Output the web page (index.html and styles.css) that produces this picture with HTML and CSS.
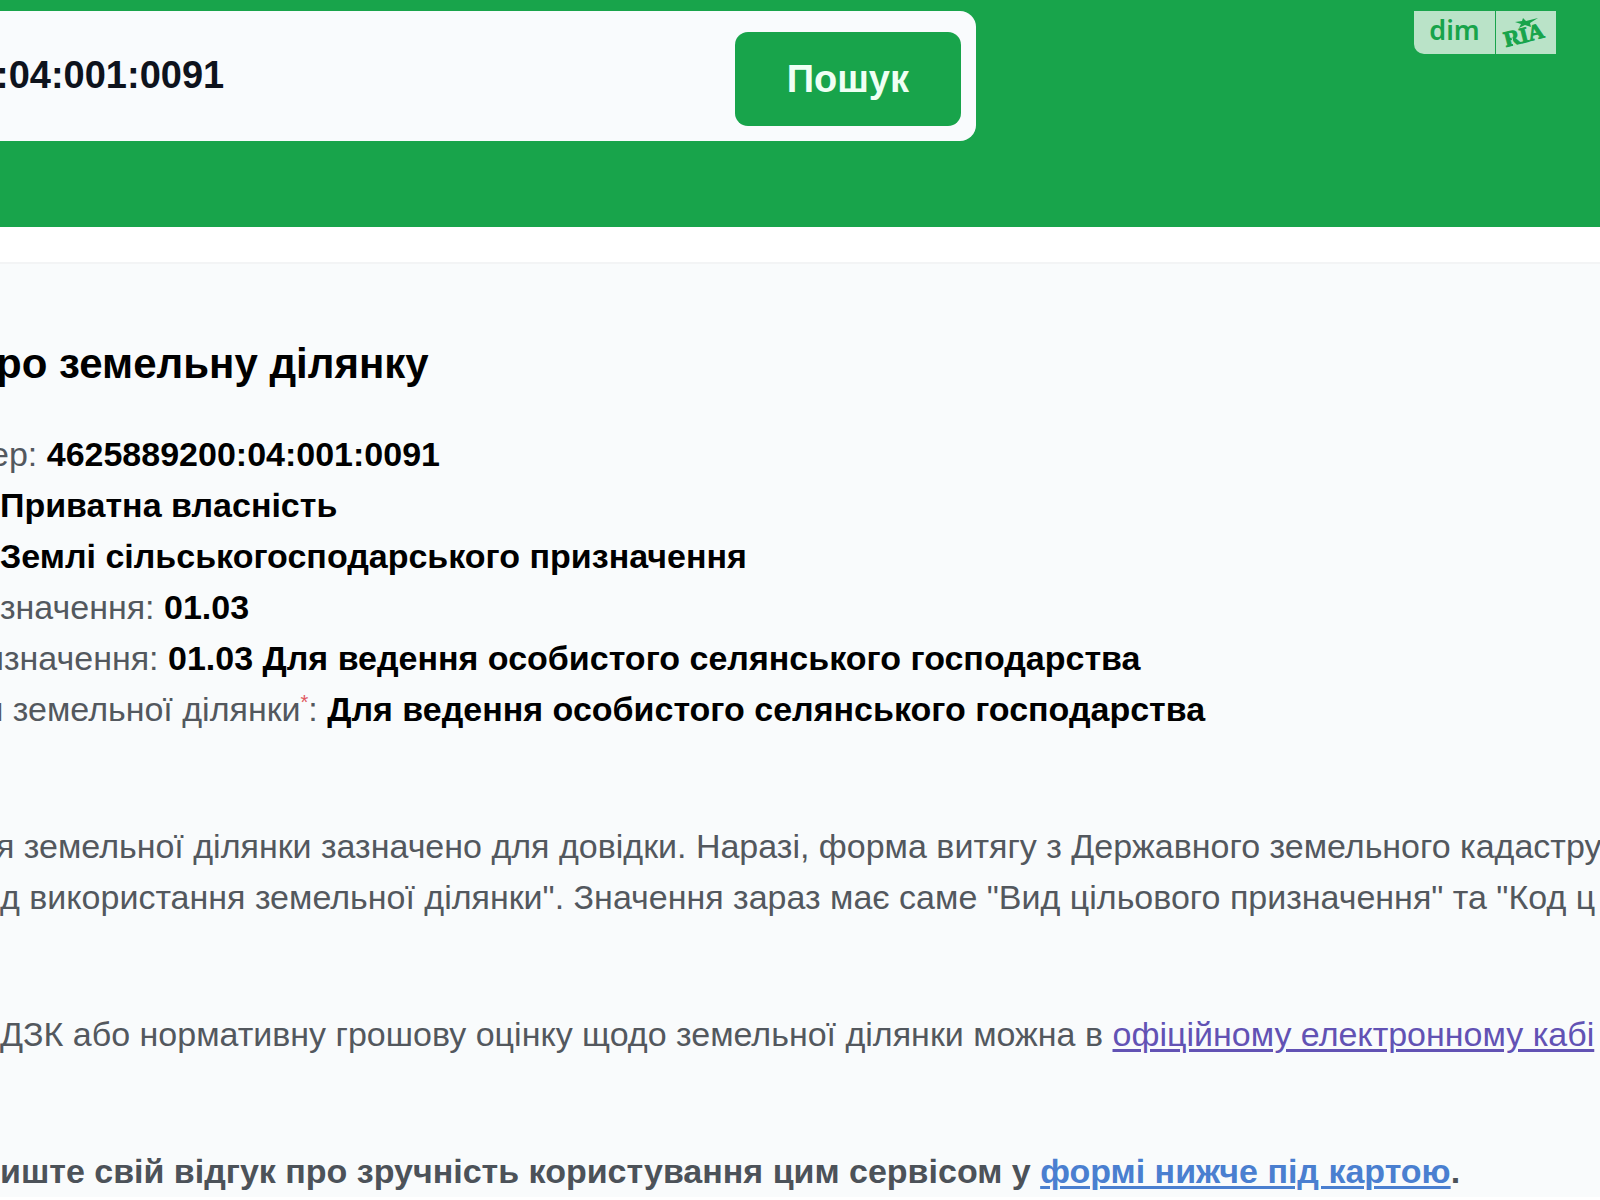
FILE: index.html
```html
<!DOCTYPE html>
<html lang="uk">
<head>
<meta charset="utf-8">
<title>Земельна ділянка</title>
<link rel="stylesheet" href="styles.css">
</head>
<body>
<header class="header">
  <form class="search">
    <input class="search-input" type="text" aria-label="Пошук" value=":04:001:0091">
    <button class="search-button" type="button">Пошук</button>
  </form>
  <div class="badge">
    <span class="badge-name">dim</span>
    <svg class="badge-logo" viewBox="0 0 60 43" width="60" height="43" role="img" aria-label="RIA">
      <text class="badge-ria" x="10" y="36" transform="rotate(-14 10 36)">RIA</text>
      <path d="M27 7 L30 10 L42 7 L34 12 L35 16 L29 14 L23 17 L25 13 L19 11 L26 10 Z"/>
      <path class="badge-cut" d="M15 22 L18 36 M49 15 L53 28"/>
    </svg>
  </div>
</header>
<main class="parcel">
  <h1 class="title cut-slight">ро земельну ділянку</h1>
  <div class="facts">
    <p class="line cut">ер: <strong>4625889200:04:001:0091</strong></p>
    <p class="line"><strong>Приватна власність</strong></p>
    <p class="line"><strong>Землі сільськогосподарського призначення</strong></p>
    <p class="line">значення: <strong>01.03</strong></p>
    <p class="line cut-deep">изначення: <strong>01.03 Для ведення особистого селянського господарства</strong></p>
    <p class="line cut-deep">я земельної ділянки<sup class="star">*</sup>: <strong>Для ведення особистого селянського господарства</strong></p>
  </div>
  <div class="note">
    <p class="line cut-slight">я земельної ділянки зазначено для довідки. Наразі, форма витягу з Державного земельного кадастру</p>
    <p class="line">д використання земельної ділянки". Значення зараз має саме "Вид цільового призначення" та "Код ц</p>
  </div>
  <p class="line">ДЗК або нормативну грошову оцінку щодо земельної ділянки можна в <a class="visited" href="#cabinet">офіційному електронному кабі</a></p>
  <p class="line feedback">иште свій відгук про зручність користування цим сервісом у <a class="link" href="#form">формі нижче під картою</a>.</p>
</main>
</body>
</html>
```
FILE: styles.css
```css
* { box-sizing: border-box; }
body {
  margin: 0;
  overflow: hidden;
  background: #fff;
  color: #53585e;
  font-family: "Liberation Sans", Arial, sans-serif;
  font-size: 34px;
}
.header {
  position: relative;
  padding: 11px 0 86px;
  background: #18a44b;
}
.search {
  display: flex;
  width: 61%;
  padding: 21px 15px 15px 0;
  background: #f9fbfd;
  border-radius: 0 16px 16px 0;
}
.search-input {
  flex: 1;
  min-width: 0;
  padding: 0 0 8px;
  border: 0;
  outline: 0;
  background: transparent;
  color: #0e131d;
  font: bold 38px "Liberation Sans", Arial, sans-serif;
  text-indent: -4px;
}
.search-button {
  height: 94px;
  padding: 0 52px;
  border: 0;
  border-radius: 13px;
  background: #18a44b;
  color: #effff4;
  font: bold 38px "Liberation Sans", Arial, sans-serif;
}
.badge {
  position: absolute;
  top: 11px;
  right: 44px;
  display: flex;
  height: 43px;
  border-radius: 0 0 0 10px;
  background: #bae3c8;
  color: #18a44b;
}
.badge-name {
  width: 82px;
  border-right: 1px solid #18a44b;
  font: 600 27px/38px "Noto Sans", sans-serif;
  text-align: center;
}
.badge-logo { fill: #18a44b; }
.badge-ria { font: bold 22px "Liberation Serif", serif; stroke: #18a44b; stroke-width: 1; }
.badge-cut { stroke: #bae3c8; stroke-width: 1; }
.parcel {
  display: flex;
  flex-direction: column;
  gap: 86px;
  margin-top: 35px;
  padding: 70px 0 0;
  border-top: 2px solid #f3f4f5;
  background: #f9fbfc;
  white-space: nowrap;
}
.title {
  margin: 0 0 -51px;
  color: #000;
  font-size: 42px;
  line-height: 60px;
}
.line { margin: 0; line-height: 51px; }
.cut-slight { margin-left: -4px; }
.cut { margin-left: -10px; }
.cut-deep { margin-left: -15px; }
.facts strong { color: #000; }
.star { color: #e0575f; font-size: 20px; line-height: 0; }
.feedback { font-weight: bold; color: #4c5259; }
.visited { color: #6252b4; }
.link { color: #4a7fd0; }
.visited, .link { text-decoration-thickness: 3px; text-underline-offset: 3px; }
```
